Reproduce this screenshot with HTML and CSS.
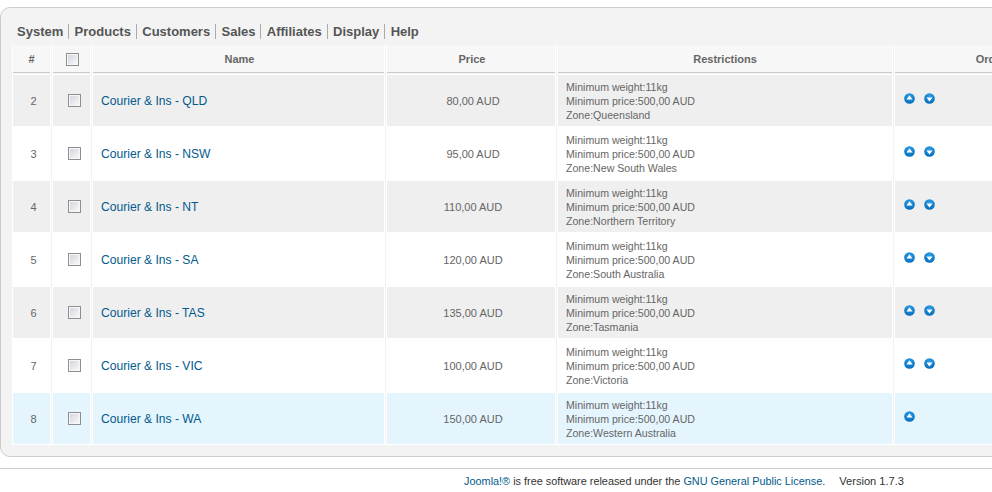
FILE: index.html
```html
<!DOCTYPE html>
<html lang="en">
<head>
<meta charset="utf-8">
<title>Shipping rates</title>
<link rel="stylesheet" href="styles.css">
</head>
<body>
<svg class="defs" width="0" height="0" aria-hidden="true">
  <defs>
    <radialGradient id="ball" cx="50%" cy="30%" r="75%">
      <stop offset="0" stop-color="#2fa0e8"/>
      <stop offset="1" stop-color="#0068b8"/>
    </radialGradient>
    <symbol id="up" viewBox="0 0 11 11">
      <circle cx="5.5" cy="5.5" r="5.3" fill="url(#ball)"/>
      <path d="M5.5 2.6 8.6 6.6H2.4Z" fill="#fff"/>
    </symbol>
    <symbol id="down" viewBox="0 0 11 11">
      <circle cx="5.5" cy="5.5" r="5.3" fill="url(#ball)"/>
      <path d="M5.5 8.4 8.6 4.4H2.4Z" fill="#fff"/>
    </symbol>
  </defs>
</svg>
<main class="panel">
  <nav class="tabs">
    <a class="tab">System</a><a class="tab">Products</a><a class="tab">Customers</a><a class="tab">Sales</a><a class="tab">Affiliates</a><a class="tab">Display</a><a class="tab">Help</a>
  </nav>
  <table class="list">
    <colgroup>
      <col class="c-num"><col class="c-check"><col class="c-name"><col class="c-price"><col class="c-restrict"><col class="c-order">
    </colgroup>
    <thead>
      <tr>
        <th>#</th>
        <th class="head-check"><span class="box"></span></th>
        <th class="head-name">Name</th>
        <th class="head-price">Price</th>
        <th>Restrictions</th>
        <th>Ordering</th>
      </tr>
    </thead>
    <tbody>
      <tr class="odd">
        <td class="num">2</td><td class="check"><span class="box"></span></td>
        <td class="name"><a>Courier &amp; Ins - QLD</a></td><td class="price">80,00 AUD</td>
        <td class="rules">Minimum weight:11kg<br>Minimum price:500,00 AUD<br>Zone:Queensland</td>
        <td class="order"><svg class="arrow"><use href="#up"/></svg><svg class="arrow"><use href="#down"/></svg></td>
      </tr>
      <tr>
        <td class="num">3</td><td class="check"><span class="box"></span></td>
        <td class="name"><a>Courier &amp; Ins - NSW</a></td><td class="price">95,00 AUD</td>
        <td class="rules">Minimum weight:11kg<br>Minimum price:500,00 AUD<br>Zone:New South Wales</td>
        <td class="order"><svg class="arrow"><use href="#up"/></svg><svg class="arrow"><use href="#down"/></svg></td>
      </tr>
      <tr class="odd">
        <td class="num">4</td><td class="check"><span class="box"></span></td>
        <td class="name"><a>Courier &amp; Ins - NT</a></td><td class="price">110,00 AUD</td>
        <td class="rules">Minimum weight:11kg<br>Minimum price:500,00 AUD<br>Zone:Northern Territory</td>
        <td class="order"><svg class="arrow"><use href="#up"/></svg><svg class="arrow"><use href="#down"/></svg></td>
      </tr>
      <tr>
        <td class="num">5</td><td class="check"><span class="box"></span></td>
        <td class="name"><a>Courier &amp; Ins - SA</a></td><td class="price">120,00 AUD</td>
        <td class="rules">Minimum weight:11kg<br>Minimum price:500,00 AUD<br>Zone:South Australia</td>
        <td class="order"><svg class="arrow"><use href="#up"/></svg><svg class="arrow"><use href="#down"/></svg></td>
      </tr>
      <tr class="odd">
        <td class="num">6</td><td class="check"><span class="box"></span></td>
        <td class="name"><a>Courier &amp; Ins - TAS</a></td><td class="price">135,00 AUD</td>
        <td class="rules">Minimum weight:11kg<br>Minimum price:500,00 AUD<br>Zone:Tasmania</td>
        <td class="order"><svg class="arrow"><use href="#up"/></svg><svg class="arrow"><use href="#down"/></svg></td>
      </tr>
      <tr>
        <td class="num">7</td><td class="check"><span class="box"></span></td>
        <td class="name"><a>Courier &amp; Ins - VIC</a></td><td class="price">100,00 AUD</td>
        <td class="rules">Minimum weight:11kg<br>Minimum price:500,00 AUD<br>Zone:Victoria</td>
        <td class="order"><svg class="arrow"><use href="#up"/></svg><svg class="arrow"><use href="#down"/></svg></td>
      </tr>
      <tr class="hover">
        <td class="num">8</td><td class="check"><span class="box"></span></td>
        <td class="name"><a>Courier &amp; Ins - WA</a></td><td class="price">150,00 AUD</td>
        <td class="rules">Minimum weight:11kg<br>Minimum price:500,00 AUD<br>Zone:Western Australia</td>
        <td class="order"><svg class="arrow"><use href="#up"/></svg></td>
      </tr>
    </tbody>
  </table>
</main>
<footer class="footer">
  <p class="legal"><a>Joomla!®</a> is free software released under the <a>GNU General Public License</a>.</p>
  <p class="version">Version 1.7.3</p>
</footer>
</body>
</html>
```
FILE: styles.css
```css
html, body {
  margin: 0;
  padding: 0;
}
body {
  width: 992px;
  height: 492px;
  overflow: hidden;
  background: #fff;
  font-family: "Liberation Sans", Arial, sans-serif;
  font-size: 11px;
  color: #666;
}
.defs {
  display: block;
  height: 0;
}
.panel {
  width: 1200px;
  height: 450px;
  margin-top: 7px;
  box-sizing: border-box;
  padding: 11px 0 0 10px;
  background: #f3f3f3;
  border: 1px solid #ccc;
  border-radius: 10px;
}
.tabs {
  display: flex;
  align-items: center;
  height: 24px;
  margin-bottom: 2px;
  padding-left: 6px;
}
.tab {
  padding: 0 5px 0 5.33px;
  border-right: 1px solid #aaa;
  font-size: 13px;
  font-weight: bold;
  line-height: 15px;
  color: #555;
}
.tab:first-child {
  padding-left: 0;
}
.tab:last-child {
  border-right: 0;
}
.list {
  width: 1094px;
  table-layout: fixed;
  border-collapse: separate;
  border-spacing: 1px 0;
}
.c-num { width: 39px; }
.c-check { width: 39px; }
.c-name { width: 293px; }
.c-price { width: 170px; }
.c-restrict { width: 336px; }
.c-order { width: 210px; }
.list th {
  height: 28px;
  padding: 0;
  background: #f7f7f7;
  border-left: 1px solid #fff;
  border-right: 1px solid #fff;
  border-bottom: 1px solid #f3f3f3;
  box-shadow: inset 0 -1px 0 #ccc;
  font-size: 11px;
  font-weight: bold;
  color: #666;
  text-align: center;
}
.list .head-check,
.list .head-name,
.list .head-price {
  padding-left: 2px;
}
.list td {
  height: 51px;
  padding: 0;
  background: #fff;
  border: 1px solid #fff;
  font-size: 11px;
  line-height: 14px;
  color: #666;
}
.list .odd td {
  background: #efefef;
}
.list .hover td {
  background: #e5f5fe;
}
.list .num {
  padding-left: 4px;
  text-align: center;
}
.list .check {
  padding-left: 6px;
}
.list .price {
  padding-left: 4px;
  text-align: center;
}
.list .name {
  padding-left: 8px;
  font-size: 12.1px;
  color: #025a8d;
}
.list .rules {
  padding-left: 8px;
  font-size: 10.6px;
}
.list .order {
  padding-left: 9px;
}
.order .arrow {
  display: inline-block;
  width: 11px;
  height: 11px;
  margin: 0 9px 5px 0;
  vertical-align: middle;
}
.box {
  display: block;
  width: 11px;
  height: 11px;
  margin: 0 auto;
  border: 1px solid #8e8e8e;
  box-shadow: inset 0 0 0 1px #f7f7f7;
  background: linear-gradient(135deg, #cfd3dc, #fbfbfb);
}
.footer {
  display: flex;
  justify-content: flex-end;
  gap: 14px;
  box-sizing: border-box;
  height: 24px;
  margin-top: 11px;
  padding: 5px 88px 0 0;
  border-top: 1px solid #ccc;
  font-size: 10.86px;
  line-height: 14px;
  color: #333;
}
.footer p {
  margin: 0;
}
.footer .version {
  font-size: 11.1px;
}
.footer a {
  color: #025a8d;
}
```
